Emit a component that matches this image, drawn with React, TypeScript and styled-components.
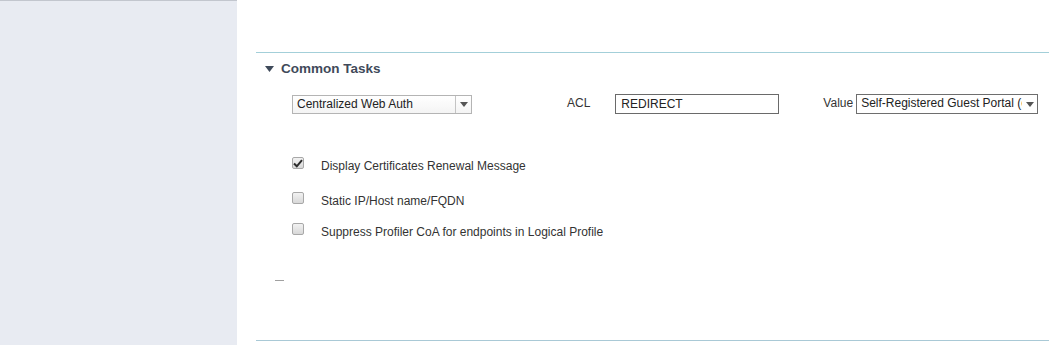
import React from 'react';
import styled, { createGlobalStyle } from 'styled-components';

const GlobalStyle = createGlobalStyle`
  html, body {
    margin: 0;
    padding: 0;
    background: #fff;
  }
  body {
    font-family: "Liberation Sans", Arial, sans-serif;
    font-size: 12px;
    color: #333;
  }
`;

const checkboxes = [
  { label: 'Display Certificates Renewal Message', checked: true, gap: 0 },
  { label: 'Static IP/Host name/FQDN', checked: false, gap: 21 },
  { label: 'Suppress Profiler CoA for endpoints in Logical Profile', checked: false, gap: 17 },
];

const Arrow: React.FC = () => (
  <svg width="8" height="5" viewBox="0 0 8 5">
    <path d="M0 0 L8 0 L4 5 Z" fill="#555" />
  </svg>
);

const App: React.FC = () => (
  <Page>
    <GlobalStyle />
    <Sidebar />
    <Main>
      <Section>
        <Header>
          <Caret>
            <svg width="9" height="6" viewBox="0 0 9 6">
              <path d="M0 0 L9 0 L4.5 6 Z" fill="#3f4a5a" />
            </svg>
          </Caret>
          Common Tasks
        </Header>
        <FormRow>
          <Select $width={180} $soft>
            <SelectText>Centralized Web Auth</SelectText>
            <SelectButton $divided>
              <Arrow />
            </SelectButton>
          </Select>
          <FieldLabel $gap={95}>ACL</FieldLabel>
          <TextInput $gap={25}>REDIRECT</TextInput>
          <FieldLabel $gap={44}>Value</FieldLabel>
          <Select $width={182} $gap={3}>
            <SelectText>Self-Registered Guest Portal (c</SelectText>
            <SelectButton>
              <Arrow />
            </SelectButton>
          </Select>
        </FormRow>
        <CheckList>
          {checkboxes.map((c) => (
            <CheckRow key={c.label} $gap={c.gap}>
              <Box>
                {c.checked && (
                  <svg width="10" height="9" viewBox="0 0 10 9">
                    <path
                      d="M1 4.5 L3.8 7.3 L9 1.2"
                      fill="none"
                      stroke="#2b2b2b"
                      strokeWidth="2"
                    />
                  </svg>
                )}
              </Box>
              <CheckLabel>{c.label}</CheckLabel>
            </CheckRow>
          ))}
        </CheckList>
        <Dash />
      </Section>
      <Footer />
    </Main>
  </Page>
);

const Page = styled.div`
  display: flex;
  height: 345px;
  width: 100%;
  overflow: hidden;
`;

const Sidebar = styled.aside`
  width: 237px;
  flex-shrink: 0;
  background: #e8ebf2;
  border-top: 1px solid #c2c6ce;
  box-sizing: border-box;
`;

const Main = styled.main`
  flex: 1;
  padding: 52px 0 0 19px;
  display: flex;
  flex-direction: column;
`;

const Section = styled.section`
  border-top: 1px solid #a3cfd9;
  height: 288px;
  box-sizing: border-box;
`;

const Header = styled.h2`
  margin: 0;
  height: 30px;
  padding-left: 9px;
  display: flex;
  align-items: center;
  font-size: 13.5px;
  font-weight: bold;
  color: #3f4a5a;
  font-family: "Liberation Sans", Arial, sans-serif;
`;

const Caret = styled.span`
  display: inline-flex;
  width: 16px;
  margin-top: 1px;
`;

const FormRow = styled.div`
  display: flex;
  align-items: center;
  margin-top: 11px;
  padding-left: 36px;
  height: 20px;
`;

const Select = styled.div<{ $width: number; $gap?: number; $soft?: boolean }>`
  display: flex;
  align-items: stretch;
  width: ${(p) => p.$width}px;
  height: ${(p) => (p.$soft ? 19 : 20)}px;
  margin-left: ${(p) => p.$gap ?? 0}px;
  box-sizing: border-box;
  border: 1px solid ${(p) => (p.$soft ? '#b4b4b4' : '#6e6e6e')};
  background: ${(p) => (p.$soft ? 'linear-gradient(#ffffff, #f4f4f4)' : '#fff')};
`;

const SelectText = styled.span`
  flex: 1;
  min-width: 0;
  padding-left: 4px;
  line-height: 17px;
  white-space: nowrap;
  overflow: hidden;
  color: #222;
`;

const SelectButton = styled.span<{ $divided?: boolean }>`
  width: 15px;
  flex-shrink: 0;
  display: flex;
  align-items: center;
  justify-content: center;
  border-left: ${(p) => (p.$divided ? '1px solid #c4c4c4' : 'none')};
`;

const FieldLabel = styled.label<{ $gap: number }>`
  margin-left: ${(p) => p.$gap}px;
  color: #333;
  position: relative;
  top: -1px;
`;

const TextInput = styled.div<{ $gap: number }>`
  margin-left: ${(p) => p.$gap}px;
  width: 164px;
  height: 20px;
  box-sizing: border-box;
  border: 1px solid #6a6a6a;
  padding-left: 5px;
  line-height: 18px;
  color: #222;
`;

const CheckList = styled.div`
  margin-top: 43px;
  padding-left: 36px;
  display: flex;
  flex-direction: column;
`;

const CheckRow = styled.div<{ $gap: number }>`
  display: flex;
  align-items: flex-start;
  height: 14px;
  margin-top: ${(p) => p.$gap}px;
`;

const Box = styled.span`
  width: 12px;
  height: 12px;
  box-sizing: border-box;
  border: 1px solid #a8a8a8;
  border-radius: 2px;
  background: linear-gradient(#f2f2f2, #d8d8d8);
  display: flex;
  align-items: center;
  justify-content: center;
`;

const CheckLabel = styled.span`
  margin-left: 17px;
  margin-top: 2px;
  color: #333;
`;

const Dash = styled.div`
  margin: 43px 0 0 19px;
  width: 9px;
  height: 1px;
  background: #a0a0a0;
`;

const Footer = styled.div`
  border-top: 1px solid #a9c9d6;
`;

export default App;
